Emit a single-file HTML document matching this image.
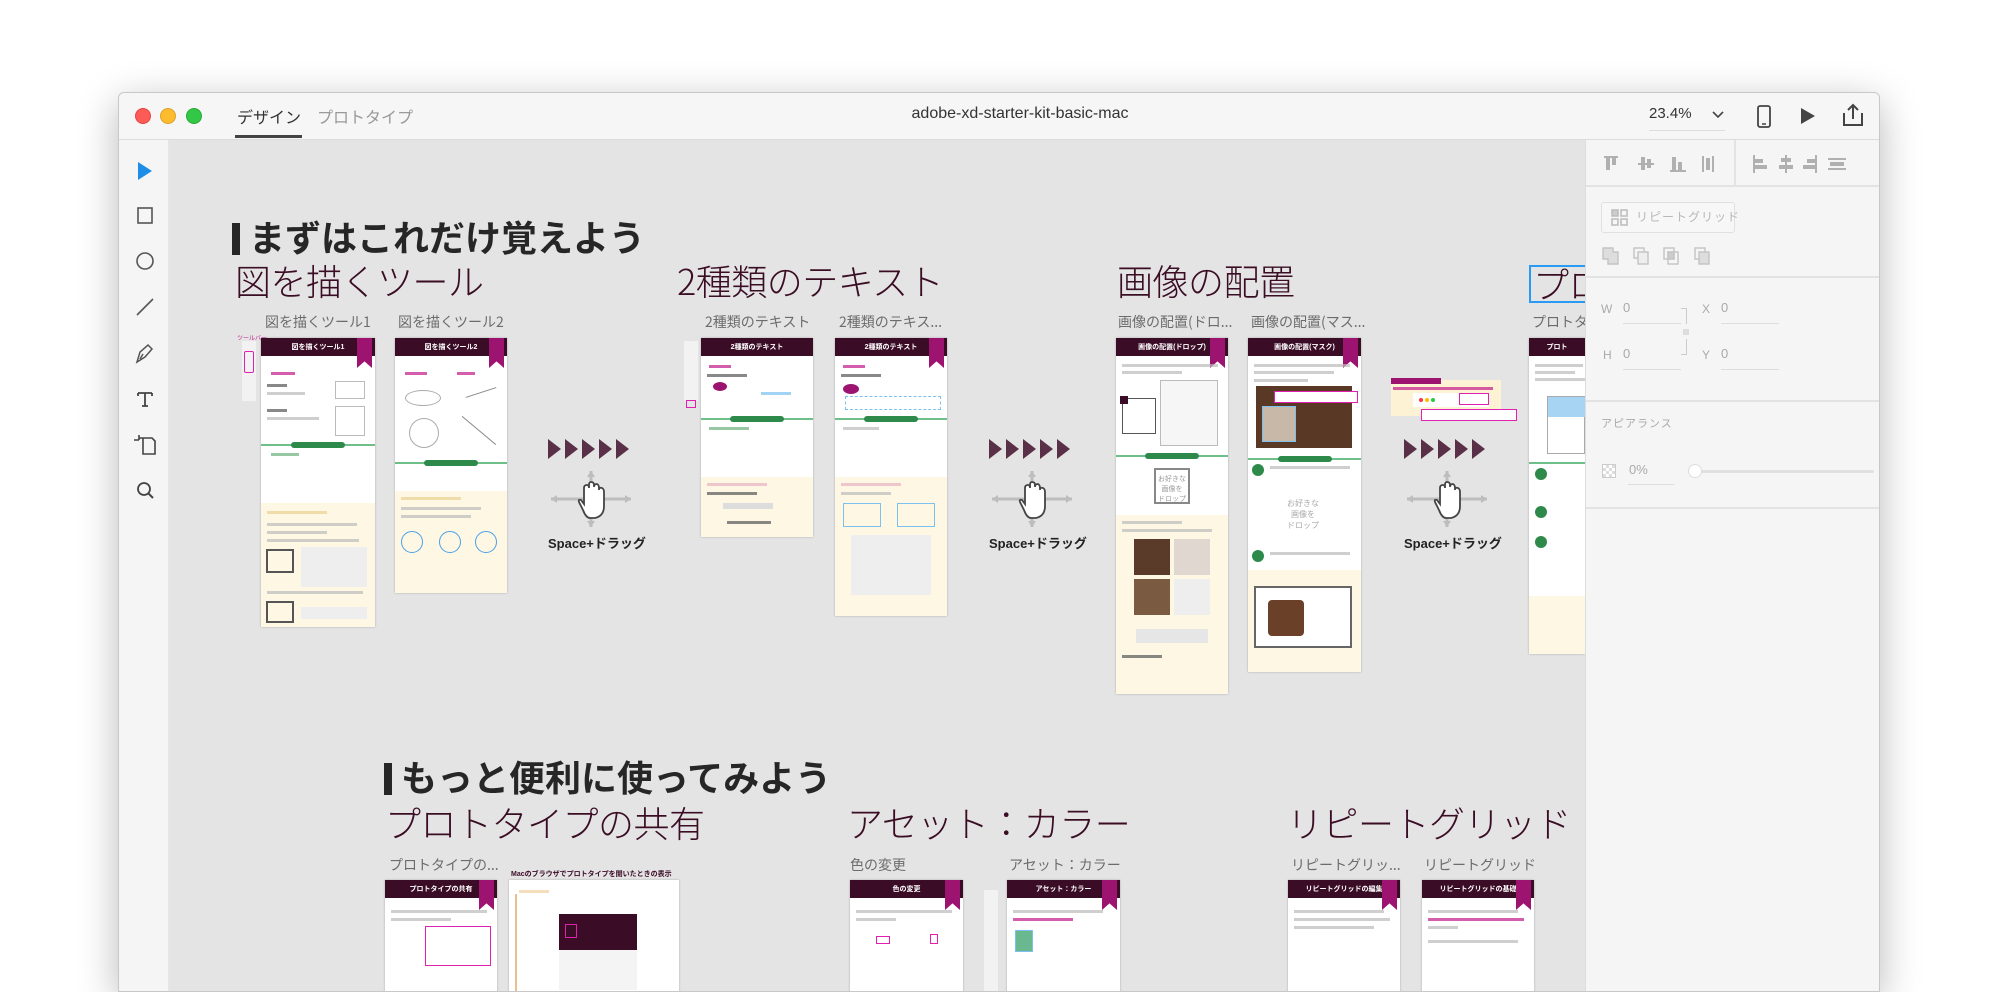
<!DOCTYPE html>
<html><head><meta charset="utf-8">
<style>
*{margin:0;padding:0;box-sizing:border-box}
body{width:2000px;height:939px;overflow:hidden;background:#fff;font-family:"Liberation Sans","Noto Sans CJK JP",sans-serif;position:relative}
.abs{position:absolute}
#win{position:absolute;left:118px;top:92px;width:1762px;height:900px;background:#e4e4e4;border:1px solid #c8c8c8;border-radius:6px 6px 0 0;box-shadow:0 10px 40px rgba(0,0,0,.28);overflow:hidden}
.jp{font-family:"Liberation Sans","Noto Sans CJK JP",sans-serif}
.h1{font-weight:bold;font-size:36px;color:#262626;letter-spacing:0}
.h1 .bar{display:inline-block;width:11px;height:32px;background:#262626;border-right:3px solid #e4e4e4;margin-right:6px;vertical-align:-4px;box-shadow:inset -3px 0 0 #262626}
.h2{font-size:36px;color:#3a0d24;font-weight:300;font-family:"Noto Sans CJK JP",sans-serif;letter-spacing:-0.5px}
.lbl{font-size:14px;color:#6c6c6c;font-family:"Noto Sans CJK JP",sans-serif}
.ab{position:absolute;background:#fff;box-shadow:0 0 2px rgba(0,0,0,.25);overflow:hidden}
.ab .hd{position:absolute;left:0;top:0;right:0;height:18px;background:#3b0c26;color:#fff;font-size:7px;text-align:center;line-height:20px;font-weight:bold}
.ab .rb{position:absolute;right:3px;top:0;width:15px;height:30px;background:#9c1470;clip-path:polygon(0 0,100% 0,100% 100%,50% 78%,0 100%)}
.ab .gl{position:absolute;left:0;right:0;height:2px;background:#6fbf8a}
.ab .gp{position:absolute;left:50%;width:54px;margin-left:-27px;height:6px;background:#2e8a4a;border-radius:3px}
.ab .cr{position:absolute;left:0;right:0;bottom:0;background:#fdf7e4}
.ln{position:absolute;height:3px;background:#bbb;opacity:.7}
.lnm{position:absolute;height:3px;background:#c2188c;opacity:.7}
.arr{position:absolute;display:flex;gap:4px}
.arr i{display:block;width:0;height:0;border-top:10px solid transparent;border-bottom:10px solid transparent;border-left:13px solid #5a3048}
.sd{position:absolute;font-size:13px;color:#222;font-weight:bold;font-family:"Liberation Sans","Noto Sans CJK JP",sans-serif}
.rp{position:absolute;left:1466px;top:47px;width:296px;height:860px;background:#f5f5f5;border-left:1px solid #ddd}
.sep{position:absolute;left:0;right:0;height:2px;background:#e3e3e3}
</style></head><body>
<div id="win">
 <div class="abs" style="left:0;top:0;width:1762px;height:47px;background:#f6f6f6;border-bottom:1px solid #dcdcdc"></div>
 <div class="abs" style="left:16px;top:15px;width:16px;height:16px;border-radius:50%;background:#fc5b57;border:1px solid #e2463f"></div>
 <div class="abs" style="left:41px;top:15px;width:16px;height:16px;border-radius:50%;background:#fdbc2e;border:1px solid #e0a028"></div>
 <div class="abs" style="left:67px;top:15px;width:16px;height:16px;border-radius:50%;background:#33c748;border:1px solid #27aa35"></div>
 <div class="abs jp" style="left:118px;top:11px;font-size:16px;color:#333">デザイン</div>
 <div class="abs" style="left:116px;top:42px;width:67px;height:3px;background:#444"></div>
 <div class="abs jp" style="left:198px;top:11px;font-size:16px;color:#999">プロトタイプ</div>
 <div class="abs" style="left:0;top:12px;width:1802px;text-align:center;font-size:16px;color:#333">adobe-xd-starter-kit-basic-mac</div>
 <div class="abs" style="left:1530px;top:12px;font-size:15px;color:#333">23.4%</div>
 <div class="abs" style="left:1530px;top:37px;width:76px;height:1px;background:#ddd"></div>
 <svg class="abs" style="left:1592px;top:16px" width="14" height="10"><path d="M2 3 L7 8 L12 3" stroke="#444" stroke-width="1.6" fill="none"/></svg>
 <svg class="abs" style="left:1637px;top:12px" width="16" height="24"><rect x="2" y="1" width="12" height="21" rx="2" stroke="#444" stroke-width="1.8" fill="none"/><line x1="6" y1="19" x2="10" y2="19" stroke="#444" stroke-width="1.5"/></svg>
 <svg class="abs" style="left:1680px;top:13px" width="18" height="20"><path d="M2 2 L16 10 L2 18Z" fill="#444"/></svg>
 <svg class="abs" style="left:1722px;top:10px" width="24" height="24"><path d="M3 10 V22 H21 V10 M12 16 V2 M7 7 L12 2 L17 7" stroke="#444" stroke-width="2" fill="none"/></svg>

 <div class="abs" style="left:0;top:47px;width:50px;height:860px;background:#f5f5f5;border-right:1px solid #e6e6e6"></div>
 <svg class="abs" style="left:0;top:47px" width="50" height="420">
  <path d="M19 22 L33 31 L19 40Z" fill="#1e8de8"/>
  <g transform="translate(0,7)"><rect x="19" y="61" width="14" height="15" fill="none" stroke="#555" stroke-width="1.6"/></g>
  <g transform="translate(0,6)"><circle cx="26" cy="115" r="8" fill="none" stroke="#555" stroke-width="1.6"/></g>
  <g transform="translate(0,5)"><line x1="18" y1="170" x2="34" y2="154" stroke="#555" stroke-width="1.6"/></g>
  <g transform="translate(0,8)"><path d="M18 214 L21 204 L29 197 L33 201 L26 209Z M24 206 L21 211" fill="none" stroke="#555" stroke-width="1.5"/></g>
  <g transform="translate(0,7)"><path d="M19 246 H33 M26 246 V259 M23 259 H29 M19 246 V249 M33 246 V249" stroke="#444" stroke-width="1.8" fill="none"/></g>
  <g transform="translate(0,8)"><path d="M20 290 H33 L36 293 V306 H24 V290 M15 292 H20 M20 287 V292" stroke="#444" stroke-width="1.6" fill="none"/></g>
  <g transform="translate(0,9)"><circle cx="25" cy="340" r="6" fill="none" stroke="#444" stroke-width="1.8"/><line x1="29" y1="344" x2="34" y2="349" stroke="#444" stroke-width="2"/></g>
 </svg>

 <div class="abs h1 jp" style="left:113px;top:117px"><span class="bar"></span>まずはこれだけ覚えよう</div>
 <div class="abs h2" style="left:116px;top:161px">図を描くツール</div>
 <div class="abs h2" style="left:558px;top:161px">2種類のテキスト</div>
 <div class="abs h2" style="left:998px;top:161px">画像の配置</div>
 <div class="abs h2" style="left:1410px;top:172px;border:2px solid #2b9af3;height:38px;width:80px;line-height:32px;overflow:hidden;padding-left:2px">プロ</div>

 <div class="abs lbl" style="left:146px;top:219px">図を描くツール1</div>
 <div class="abs lbl" style="left:279px;top:219px">図を描くツール2</div>
 <div class="abs lbl" style="left:586px;top:219px">2種類のテキスト</div>
 <div class="abs lbl" style="left:720px;top:219px">2種類のテキス...</div>
 <div class="abs lbl" style="left:999px;top:219px">画像の配置(ドロ...</div>
 <div class="abs lbl" style="left:1132px;top:219px">画像の配置(マス...</div>
 <div class="abs lbl" style="left:1413px;top:219px">プロトタ</div>

 <div class="abs" style="left:123px;top:248px;width:14px;height:60px;background:#f2f2f2"></div>
 <div class="abs" style="left:125px;top:258px;width:10px;height:22px;border:1.5px solid #e020b0;border-radius:2px"></div>
 <div class="abs" style="left:118px;top:240px;font-size:6px;color:#c02090">ツールバー</div>
 <div class="abs" style="left:565px;top:248px;width:14px;height:60px;background:#f2f2f2"></div>
 <div class="abs" style="left:567px;top:307px;width:10px;height:8px;border:1.5px solid #e020b0"></div>

 <div class="ab" style="left:142px;top:245px;width:114px;height:289px"><div class="hd">図を描くツール1</div><div class="rb"></div>
  <div class="lnm" style="left:10px;top:34px;width:24px"></div><div class="ln" style="left:6px;top:46px;width:20px;background:#555"></div><div class="ln" style="left:6px;top:54px;width:38px"></div>
  <div class="abs" style="left:74px;top:43px;width:30px;height:18px;border:1px solid #bbb"></div><div class="abs" style="left:74px;top:68px;width:30px;height:30px;border:1px solid #bbb"></div>
  <div class="ln" style="left:6px;top:71px;width:20px;background:#555"></div><div class="ln" style="left:6px;top:79px;width:52px"></div>
  <div class="gl" style="top:106px"></div><div class="gp" style="top:104px"></div><div class="ln" style="left:10px;top:115px;width:28px;background:#6cb07c"></div>
  <div class="cr" style="top:165px"><div class="lnm" style="left:6px;top:8px;width:60px;background:#e8d090"></div><div class="ln" style="left:6px;top:20px;width:90px"></div><div class="ln" style="left:6px;top:28px;width:60px"></div><div class="ln" style="left:6px;top:36px;width:92px"></div>
   <div class="abs" style="left:5px;top:46px;width:28px;height:24px;border:2px solid #555"></div><div class="abs" style="left:40px;top:44px;width:66px;height:40px;background:#eee"></div>
   <div class="ln" style="left:6px;top:88px;width:96px"></div><div class="abs" style="left:5px;top:98px;width:28px;height:22px;border:2px solid #555"></div><div class="abs" style="left:40px;top:104px;width:66px;height:12px;background:#eee"></div></div>
 </div>
 <div class="ab" style="left:276px;top:245px;width:112px;height:255px"><div class="hd">図を描くツール2</div><div class="rb"></div>
  <div class="lnm" style="left:10px;top:34px;width:22px"></div><div class="lnm" style="left:62px;top:34px;width:18px"></div>
  <div class="abs" style="left:10px;top:52px;width:36px;height:16px;border:1px solid #aaa;border-radius:50%"></div>
  <div class="abs" style="left:70px;top:54px;width:32px;height:1px;background:#888;transform:rotate(-18deg)"></div>
  <div class="abs" style="left:14px;top:80px;width:30px;height:30px;border:1px solid #aaa;border-radius:50%"></div>
  <div class="abs" style="left:62px;top:92px;width:44px;height:1px;background:#888;transform:rotate(40deg)"></div>
  <div class="gl" style="top:124px"></div><div class="gp" style="top:122px"></div>
  <div class="cr" style="top:153px"><div class="ln" style="left:6px;top:6px;width:60px;background:#e8d090"></div><div class="ln" style="left:6px;top:16px;width:80px"></div><div class="ln" style="left:6px;top:24px;width:70px"></div>
   <div class="abs" style="left:6px;top:40px;width:22px;height:22px;border:1px solid #4aa0e8;border-radius:50%"></div><div class="abs" style="left:44px;top:40px;width:22px;height:22px;border:1px solid #4aa0e8;border-radius:50%"></div><div class="abs" style="left:80px;top:40px;width:22px;height:22px;border:1px solid #4aa0e8;border-radius:50%"></div></div>
 </div>
 <div class="ab" style="left:582px;top:245px;width:112px;height:199px"><div class="hd">2種類のテキスト</div>
  <div class="lnm" style="left:8px;top:27px;width:22px"></div><div class="ln" style="left:6px;top:36px;width:40px;background:#555"></div>
  <div class="abs" style="left:12px;top:44px;width:14px;height:9px;background:#9c1470;border-radius:50%"></div><div class="ln" style="left:60px;top:54px;width:30px;background:#7cc0f0"></div>
  <div class="gl" style="top:80px"></div><div class="gp" style="top:78px"></div><div class="ln" style="left:8px;top:89px;width:40px;background:#6cb07c"></div>
  <div class="cr" style="top:139px"><div class="ln" style="left:6px;top:6px;width:60px;background:#e8b0c0"></div><div class="ln" style="left:6px;top:15px;width:50px;background:#555"></div><div class="abs" style="left:22px;top:26px;width:50px;height:6px;background:#ddd"></div><div class="ln" style="left:26px;top:44px;width:44px;background:#555"></div></div>
 </div>
 <div class="ab" style="left:716px;top:245px;width:112px;height:278px"><div class="hd">2種類のテキスト</div><div class="rb"></div>
  <div class="lnm" style="left:8px;top:27px;width:22px"></div><div class="ln" style="left:6px;top:36px;width:40px;background:#555"></div>
  <div class="abs" style="left:8px;top:46px;width:16px;height:10px;background:#9c1470;border-radius:50%"></div><div class="abs" style="left:10px;top:58px;width:96px;height:14px;border:1px dashed #7cc0f0"></div>
  <div class="gl" style="top:80px"></div><div class="gp" style="top:78px"></div><div class="ln" style="left:8px;top:89px;width:36px"></div>
  <div class="cr" style="top:139px"><div class="ln" style="left:6px;top:6px;width:60px;background:#e8b0c0"></div><div class="ln" style="left:6px;top:15px;width:50px"></div><div class="abs" style="left:8px;top:26px;width:38px;height:24px;border:1px solid #7cc0f0"></div><div class="abs" style="left:62px;top:26px;width:38px;height:24px;border:1px solid #7cc0f0"></div><div class="abs" style="left:16px;top:58px;width:80px;height:60px;background:#eee"></div></div>
 </div>
 <div class="ab" style="left:997px;top:245px;width:112px;height:356px"><div class="hd">画像の配置(ドロップ)</div><div class="rb"></div>
  <div class="ln" style="left:6px;top:26px;width:96px"></div><div class="ln" style="left:6px;top:33px;width:60px"></div>
  <div class="abs" style="left:44px;top:42px;width:58px;height:66px;border:1px solid #bbb;background:#f6f6f6"></div>
  <div class="abs" style="left:6px;top:60px;width:34px;height:36px;border:1.5px solid #555"></div><div class="abs" style="left:4px;top:58px;width:8px;height:8px;background:#3b0c26"></div>
  <div class="gl" style="top:117px"></div><div class="gp" style="top:115px"></div>
  <div class="abs" style="left:38px;top:130px;width:36px;height:36px;border:2px solid #888;font-size:7px;color:#999;text-align:center;padding-top:4px">お好きな<br>画像を<br>ドロップ</div>
  <div class="cr" style="top:177px"><div class="ln" style="left:6px;top:6px;width:60px"></div><div class="ln" style="left:6px;top:14px;width:90px"></div>
   <div class="abs" style="left:18px;top:24px;width:36px;height:36px;background:#5a3a28"></div><div class="abs" style="left:58px;top:24px;width:36px;height:36px;background:#e0d8d0"></div><div class="abs" style="left:18px;top:64px;width:36px;height:36px;background:#7a5a40"></div><div class="abs" style="left:58px;top:64px;width:36px;height:36px;background:#eee"></div>
   <div class="abs" style="left:20px;top:114px;width:72px;height:14px;background:#e6e6e6"></div><div class="ln" style="left:6px;top:140px;width:40px;background:#555"></div></div>
 </div>
 <div class="ab" style="left:1129px;top:245px;width:113px;height:334px"><div class="hd">画像の配置(マスク)</div><div class="rb"></div>
  <div class="ln" style="left:6px;top:26px;width:96px"></div><div class="ln" style="left:6px;top:33px;width:80px"></div><div class="ln" style="left:6px;top:41px;width:54px"></div>
  <div class="abs" style="left:8px;top:48px;width:96px;height:62px;background:#5a3826"></div><div class="abs" style="left:14px;top:68px;width:34px;height:36px;background:#c8b8a8;border:1px solid #7cc0f0"></div><div class="abs" style="left:26px;top:53px;width:84px;height:12px;border:1.5px solid #e020b0;background:#fff"></div>
  <div class="gl" style="top:120px"></div><div class="gp" style="top:118px"></div>
  <div class="abs" style="left:4px;top:126px;width:12px;height:12px;border-radius:50%;background:#2e8a4a"></div><div class="ln" style="left:22px;top:128px;width:80px"></div>
  <div class="abs" style="left:30px;top:160px;width:50px;font-size:8px;color:#aaa;text-align:center">お好きな<br>画像を<br>ドロップ</div>
  <div class="abs" style="left:4px;top:212px;width:12px;height:12px;border-radius:50%;background:#2e8a4a"></div><div class="ln" style="left:22px;top:214px;width:80px"></div>
  <div class="cr" style="top:232px;height:80px;bottom:auto"><div class="abs" style="left:6px;top:16px;width:98px;height:62px;border:2px solid #666;background:#fff"></div><div class="abs" style="left:20px;top:30px;width:36px;height:36px;background:#6a4028;border-radius:4px"></div></div>
  <div class="cr" style="height:22px"></div>
 </div>
 <div class="ab" style="left:1410px;top:245px;width:56px;height:316px"><div class="hd">プロト</div>
  <div class="ln" style="left:6px;top:26px;width:48px"></div><div class="ln" style="left:6px;top:33px;width:40px"></div><div class="ln" style="left:6px;top:40px;width:50px"></div>
  <div class="abs" style="left:18px;top:58px;width:38px;height:58px;border:1px solid #aaa"></div><div class="abs" style="left:19px;top:59px;width:37px;height:20px;background:#a8d4f4"></div>
  <div class="gl" style="top:124px"></div>
  <div class="abs" style="left:6px;top:130px;width:12px;height:12px;border-radius:50%;background:#2e8a4a"></div><div class="abs" style="left:6px;top:168px;width:12px;height:12px;border-radius:50%;background:#2e8a4a"></div><div class="abs" style="left:6px;top:198px;width:12px;height:12px;border-radius:50%;background:#2e8a4a"></div>
  <div class="cr" style="height:58px"></div>
 </div>

 <div class="arr" style="left:429px;top:346px"><i></i><i></i><i></i><i></i><i></i></div>
 <div class="arr" style="left:870px;top:346px"><i></i><i></i><i></i><i></i><i></i></div>
 <div class="arr" style="left:1285px;top:346px"><i></i><i></i><i></i><i></i><i></i></div>
 <svg class="abs" style="left:430px;top:375px" width="84" height="62"><path d="M2 31 H82 M42 3 V59" stroke="#bdbdbd" stroke-width="3"/><path d="M2 31 L8 27 V35Z M82 31 L76 27 V35Z M42 3 L38 9 H46Z M42 59 L38 53 H46Z" fill="#bdbdbd"/><path d="M34 42 L30 34 Q29 31 32 32 L35 36 V20 Q35 17 38 17 Q40 17 40 20 V17 Q40 14 42 14 Q45 14 45 17 V19 Q45 16 48 16 Q50 17 50 20 V22 Q50 19 53 20 Q55 21 55 24 V38 Q55 48 46 50 H41 Q37 50 34 42Z" fill="#fff" stroke="#444" stroke-width="1.8"/></svg>
 <svg class="abs" style="left:871px;top:375px" width="84" height="62"><path d="M2 31 H82 M42 3 V59" stroke="#bdbdbd" stroke-width="3"/><path d="M2 31 L8 27 V35Z M82 31 L76 27 V35Z M42 3 L38 9 H46Z M42 59 L38 53 H46Z" fill="#bdbdbd"/><path d="M34 42 L30 34 Q29 31 32 32 L35 36 V20 Q35 17 38 17 Q40 17 40 20 V17 Q40 14 42 14 Q45 14 45 17 V19 Q45 16 48 16 Q50 17 50 20 V22 Q50 19 53 20 Q55 21 55 24 V38 Q55 48 46 50 H41 Q37 50 34 42Z" fill="#fff" stroke="#444" stroke-width="1.8"/></svg>
 <svg class="abs" style="left:1286px;top:375px" width="84" height="62"><path d="M2 31 H82 M42 3 V59" stroke="#bdbdbd" stroke-width="3"/><path d="M2 31 L8 27 V35Z M82 31 L76 27 V35Z M42 3 L38 9 H46Z M42 59 L38 53 H46Z" fill="#bdbdbd"/><path d="M34 42 L30 34 Q29 31 32 32 L35 36 V20 Q35 17 38 17 Q40 17 40 20 V17 Q40 14 42 14 Q45 14 45 17 V19 Q45 16 48 16 Q50 17 50 20 V22 Q50 19 53 20 Q55 21 55 24 V38 Q55 48 46 50 H41 Q37 50 34 42Z" fill="#fff" stroke="#444" stroke-width="1.8"/></svg>
 <div class="sd" style="left:429px;top:440px">Space+ドラッグ</div>
 <div class="sd" style="left:870px;top:440px">Space+ドラッグ</div>
 <div class="sd" style="left:1285px;top:440px">Space+ドラッグ</div>
 <div class="abs" style="left:1272px;top:287px;width:110px;height:36px;background:#fdf2d4"></div>
 <div class="abs" style="left:1272px;top:285px;width:50px;height:6px;background:#9c1470"></div>
 <div class="lnm" style="left:1274px;top:294px;width:100px"></div>
 <div class="abs" style="left:1294px;top:300px;width:76px;height:14px;background:#fff"></div>
 <div class="abs" style="left:1300px;top:305px;width:4px;height:4px;border-radius:50%;background:#f33"></div><div class="abs" style="left:1306px;top:305px;width:4px;height:4px;border-radius:50%;background:#fb0"></div><div class="abs" style="left:1312px;top:305px;width:4px;height:4px;border-radius:50%;background:#2c4"></div>
 <div class="abs" style="left:1340px;top:300px;width:30px;height:12px;border:1.5px solid #e020b0;background:#fff"></div>
 <div class="abs" style="left:1302px;top:316px;width:96px;height:12px;border:1.5px solid #e020b0;background:#fff"></div>

 <div class="abs h1 jp" style="left:265px;top:657px"><span class="bar"></span>もっと便利に使ってみよう</div>
 <div class="abs h2" style="left:266px;top:703px">プロトタイプの共有</div>
 <div class="abs h2" style="left:728px;top:703px">アセット：カラー</div>
 <div class="abs h2" style="left:1168px;top:703px">リピートグリッド</div>
 <div class="abs lbl" style="left:270px;top:762px">プロトタイプの...</div>
 <div class="abs lbl" style="left:731px;top:762px">色の変更</div>
 <div class="abs lbl" style="left:890px;top:762px">アセット：カラー</div>
 <div class="abs lbl" style="left:1172px;top:762px">リピートグリッ...</div>
 <div class="abs lbl" style="left:1305px;top:762px">リピートグリッド</div>

 <div class="ab" style="left:266px;top:787px;width:112px;height:120px"><div class="hd">プロトタイプの共有</div><div class="rb"></div><div class="ln" style="left:6px;top:30px;width:96px"></div><div class="ln" style="left:6px;top:38px;width:60px"></div><div class="abs" style="left:40px;top:46px;width:66px;height:40px;border:1.5px solid #e020b0"></div></div>
 <div class="abs" style="left:392px;top:776px;font-size:7px;font-weight:bold;color:#3b0c26">Macのブラウザでプロトタイプを開いたときの表示</div>
 <div class="ab" style="left:390px;top:787px;width:170px;height:120px"><div class="abs" style="left:6px;top:14px;width:2px;height:100px;background:#e8c090"></div><div class="ln" style="left:10px;top:10px;width:30px;background:#f0d0a0"></div><div class="abs" style="left:50px;top:34px;width:78px;height:36px;background:#3b0c26"></div><div class="abs" style="left:56px;top:44px;width:12px;height:14px;border:1px solid #e020b0"></div><div class="abs" style="left:50px;top:70px;width:78px;height:40px;background:#f4f4f4"></div></div>
 <div class="ab" style="left:731px;top:787px;width:113px;height:120px"><div class="hd">色の変更</div><div class="rb"></div><div class="ln" style="left:6px;top:30px;width:96px"></div><div class="ln" style="left:6px;top:38px;width:40px"></div><div class="abs" style="left:26px;top:56px;width:14px;height:8px;border:1.5px solid #e020b0"></div><div class="abs" style="left:80px;top:54px;width:8px;height:10px;border:1.5px solid #e020b0"></div></div>
 <div class="abs" style="left:865px;top:797px;width:14px;height:110px;background:#f2f2f2"></div>
 <div class="ab" style="left:888px;top:787px;width:113px;height:120px"><div class="hd">アセット：カラー</div><div class="rb"></div><div class="ln" style="left:6px;top:30px;width:90px"></div><div class="lnm" style="left:6px;top:38px;width:60px"></div><div class="abs" style="left:8px;top:50px;width:18px;height:22px;background:#6ab890;border:1px solid #7cc0f0"></div></div>
 <div class="ab" style="left:1169px;top:787px;width:112px;height:120px"><div class="hd">リピートグリッドの編集</div><div class="rb"></div><div class="ln" style="left:6px;top:30px;width:90px"></div><div class="ln" style="left:6px;top:38px;width:96px"></div><div class="ln" style="left:6px;top:46px;width:80px"></div><div class="abs" style="left:6px;top:112px;width:100px;height:8px;background:#b0e0d0"></div></div>
 <div class="ab" style="left:1303px;top:787px;width:112px;height:120px"><div class="hd">リピートグリッドの基礎</div><div class="rb"></div><div class="ln" style="left:6px;top:30px;width:90px"></div><div class="lnm" style="left:6px;top:38px;width:96px"></div><div class="ln" style="left:6px;top:46px;width:30px"></div><div class="ln" style="left:6px;top:60px;width:90px"></div></div>

 <div class="rp">
  <svg class="abs" style="left:0;top:0" width="296" height="46">
   <g fill="#b0b0b0">
    <rect x="18" y="16" width="14" height="2"/><rect x="20" y="18" width="4" height="12"/><rect x="26" y="18" width="4" height="7"/>
    <rect x="52" y="23" width="16" height="2"/><rect x="55" y="17" width="4" height="13"/><rect x="61" y="19" width="4" height="9"/>
    <rect x="84" y="30" width="16" height="2"/><rect x="86" y="17" width="4" height="13"/><rect x="92" y="22" width="4" height="8"/>
    <rect x="116" y="16" width="2" height="16"/><rect x="126" y="16" width="2" height="16"/><rect x="120" y="18" width="4" height="12"/>
    <rect x="167" y="15" width="2" height="18"/><rect x="169" y="19" width="8" height="4"/><rect x="169" y="25" width="12" height="4"/>
    <rect x="199" y="15" width="2" height="18"/><rect x="195" y="18" width="10" height="4"/><rect x="193" y="25" width="14" height="4"/>
    <rect x="229" y="15" width="2" height="18"/><rect x="221" y="19" width="8" height="4"/><rect x="217" y="25" width="12" height="4"/>
    <rect x="242" y="18" width="18" height="2"/><rect x="244" y="22" width="14" height="4"/><rect x="242" y="28" width="18" height="2"/>
   </g>
   <line x1="149" y1="0" x2="149" y2="46" stroke="#e3e3e3" stroke-width="2"/>
  </svg>
  <div class="sep" style="top:45px"></div>
  <div class="abs" style="left:15px;top:62px;width:134px;height:31px;border:1px solid #e0e0e0;border-radius:3px;background:#f7f7f7"></div>
  <svg class="abs" style="left:24px;top:68px" width="20" height="20"><g fill="none" stroke="#bbb" stroke-width="1.5"><rect x="2" y="2" width="6" height="6" fill="#ccc"/><rect x="11" y="2" width="6" height="6"/><rect x="2" y="11" width="6" height="6"/><rect x="11" y="11" width="6" height="6"/></g></svg>
  <div class="abs jp" style="left:50px;top:68px;font-size:12px;color:#b8b8b8;letter-spacing:1px">リピートグリッド</div>
  <svg class="abs" style="left:15px;top:104px" width="120" height="24"><g fill="none" stroke="#c4c4c4" stroke-width="1.4"><path d="M2 4 H12 V8 H17 V20 H7 V15 H2Z" fill="#ddd"/><rect x="33" y="4" width="10" height="10"/><rect x="37" y="8" width="10" height="12" fill="#eee"/><rect x="63" y="4" width="10" height="11"/><rect x="67" y="8" width="10" height="12"/><rect x="67" y="8" width="6" height="7" fill="#ccc"/><rect x="94" y="4" width="10" height="11"/><rect x="98" y="8" width="10" height="12" fill="#ddd"/></g></svg>
  <div class="sep" style="top:136px"></div>
  <div class="abs" style="left:15px;top:162px;font-size:12px;color:#aaa">W</div><div class="abs" style="left:37px;top:160px;font-size:13px;color:#aaa">0</div><div class="abs" style="left:37px;top:183px;width:58px;height:1px;background:#ddd"></div>
  <div class="abs" style="left:116px;top:162px;font-size:12px;color:#aaa">X</div><div class="abs" style="left:135px;top:160px;font-size:13px;color:#aaa">0</div><div class="abs" style="left:135px;top:183px;width:58px;height:1px;background:#ddd"></div>
  <div class="abs" style="left:17px;top:208px;font-size:12px;color:#aaa">H</div><div class="abs" style="left:37px;top:206px;font-size:13px;color:#aaa">0</div><div class="abs" style="left:37px;top:229px;width:58px;height:1px;background:#ddd"></div>
  <div class="abs" style="left:116px;top:208px;font-size:12px;color:#aaa">Y</div><div class="abs" style="left:135px;top:206px;font-size:13px;color:#aaa">0</div><div class="abs" style="left:135px;top:229px;width:58px;height:1px;background:#ddd"></div>
  <div class="abs" style="left:95px;top:168px;width:6px;height:16px;border:1px solid #ccc;border-left:none;border-bottom:none"></div><div class="abs" style="left:97px;top:189px;width:6px;height:6px;background:#ddd"></div><div class="abs" style="left:95px;top:199px;width:6px;height:16px;border:1px solid #ccc;border-left:none;border-top:none"></div>
  <div class="sep" style="top:260px"></div>
  <div class="abs jp" style="left:15px;top:275px;font-size:11px;color:#aaa;letter-spacing:1px">アピアランス</div>
  <div class="abs" style="left:16px;top:324px;width:14px;height:14px;border:1px solid #ccc;background:repeating-conic-gradient(#ddd 0 25%,#fff 0 50%) 0 0/6px 6px"></div>
  <div class="abs" style="left:43px;top:322px;font-size:13px;color:#aaa">0%</div><div class="abs" style="left:42px;top:344px;width:46px;height:1px;background:#ddd"></div>
  <div class="abs" style="left:108px;top:330px;width:180px;height:3px;background:#e0e0e0;border-radius:2px"></div>
  <div class="abs" style="left:102px;top:324px;width:14px;height:14px;border-radius:50%;background:#fff;border:1px solid #ddd"></div>
  <div class="sep" style="top:367px"></div>
 </div>
</div>
</body></html>
